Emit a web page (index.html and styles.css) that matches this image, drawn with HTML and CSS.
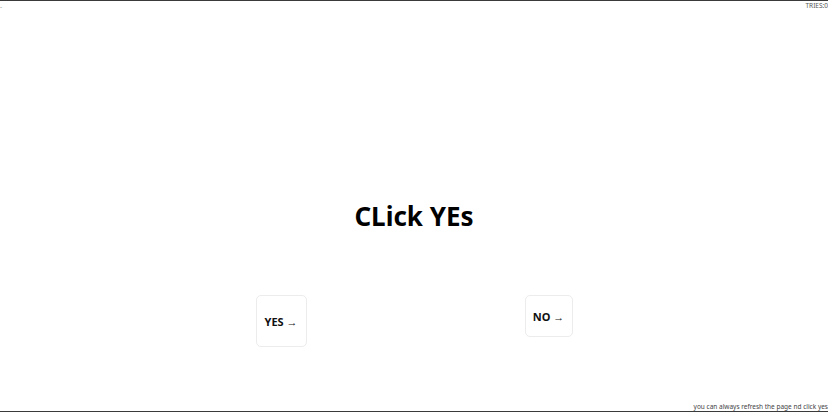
FILE: index.html
```html
<!DOCTYPE html>
<html>
<head>
<meta charset="utf-8">
<link rel="stylesheet" href="styles.css">
</head>
<body>
<div class="page">
  <div class="topbar">
    <span class="dash">-</span>
    <span class="tries">TRIES:0</span>
  </div>
  <h1 class="title">CLick YEs</h1>
  <div class="buttons">
    <button class="btn btn-yes">YES →</button>
    <button class="btn btn-no">NO →</button>
  </div>
  <div class="spacer"></div>
  <div class="footer">you can always refresh the page nd click yes</div>
</div>
</body>
</html>
```
FILE: styles.css
```css
html, body {
  margin: 0;
  padding: 0;
  background: #fff;
}
.page {
  box-sizing: border-box;
  width: 828px;
  height: 412px;
  border-top: 1px solid #3a3a3a;
  border-bottom: 1px solid #3a3a3a;
  display: flex;
  flex-direction: column;
  font-family: "Noto Sans", "Open Sans", sans-serif;
  overflow: hidden;
}
.topbar {
  display: flex;
  justify-content: space-between;
  align-items: flex-start;
  height: 12px;
  font-size: 6.5px;
  color: #555;
  line-height: 10px;
}
.dash {
  padding-top: 1px;
  color: #999;
}
.title {
  margin: 183px 0 0 0;
  text-align: center;
  font-size: 26px;
  font-weight: 700;
  line-height: 40px;
  color: #000;
}
.buttons {
  display: flex;
  justify-content: center;
  align-items: flex-start;
  gap: 218px;
  margin-top: 59px;
}
.btn {
  font-family: "Noto Sans", "Open Sans", sans-serif;
  font-weight: 700;
  font-size: 11px;
  color: #111;
  background: #fff;
  border: 1px solid #ececec;
  border-radius: 5px;
  margin: 0;
}
.btn-yes {
  width: 51px;
  height: 52px;
  padding: 0;
}
.btn-no {
  width: 48px;
  height: 42px;
  padding: 0;
}
.spacer {
  flex: 1;
}
.footer {
  text-align: right;
  font-size: 6.5px;
  line-height: 9px;
  color: #444;
  white-space: nowrap;
}
```
